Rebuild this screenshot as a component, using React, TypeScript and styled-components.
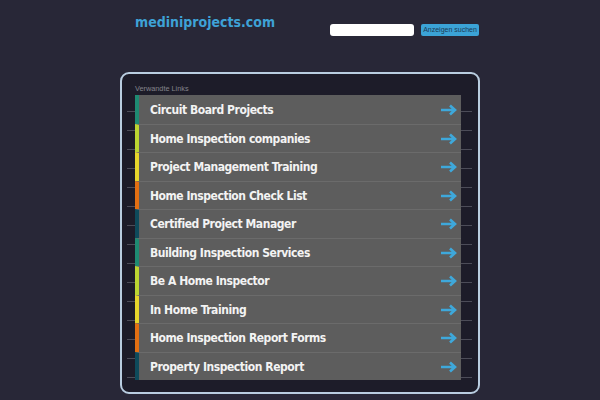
import React from "react";
import styled, { createGlobalStyle } from "styled-components";

const GlobalStyle = createGlobalStyle`
  html, body {
    margin: 0;
    padding: 0;
    background: #282737;
  }
  body {
    font-family: "DejaVu Sans", "Liberation Sans", sans-serif;
  }
`;

const Page = styled.div`
  width: 360px;
  margin: 0 auto;
`;

const Header = styled.header`
  display: flex;
  justify-content: space-between;
  align-items: flex-start;
  height: 72px;
  box-sizing: border-box;
  padding: 14px 1px 0 15px;
`;

const Title = styled.a`
  font-family: "DejaVu Sans Condensed", "DejaVu Sans", sans-serif;
  font-weight: bold;
  font-size: 14px;
  line-height: 17px;
  color: #3ea2d6;
  text-decoration: none;
`;

const SearchForm = styled.form`
  display: flex;
  gap: 7px;
  margin: 10px 0 0;
`;

const SearchInput = styled.input`
  width: 84px;
  height: 12px;
  box-sizing: border-box;
  border: none;
  border-radius: 3px;
  background: #ffffff;
  padding: 0 4px;
  outline: none;
`;

const SearchButton = styled.button`
  width: 58px;
  height: 12px;
  box-sizing: border-box;
  border: none;
  border-radius: 2px;
  background: #3ba3d6;
  color: #1b3a55;
  font-family: "Liberation Sans", Arial, sans-serif;
  font-size: 7px;
  line-height: 12px;
  padding: 0;
  white-space: nowrap;
`;

const Panel = styled.section`
  border: 2px solid #b9cde0;
  border-radius: 9px;
  background: #1d1c29;
  padding: 10px 6px 12px 5px;
`;

const Label = styled.div`
  font-family: "Liberation Sans", Arial, sans-serif;
  font-size: 7.3px;
  line-height: 10px;
  color: #84848c;
  padding-left: 8px;
  margin-bottom: 1px;
`;

const ListFrame = styled.ul`
  list-style: none;
  margin: 0;
  padding: 0 11px 0 8px;
  background: repeating-linear-gradient(
    to bottom,
    transparent 0px,
    transparent 16px,
    #4c4c58 16px,
    #4c4c58 17px,
    transparent 17px,
    transparent 19px
  );
`;

const Row = styled.li<{ $stripe: string }>`
  display: flex;
  align-items: center;
  justify-content: space-between;
  height: 28.5px;
  box-sizing: border-box;
  background: #5d5d5d;
  border-left: 4px solid ${(p) => p.$stripe};
  padding: 1px 4px 0 11px;
  & + & {
    border-top: 1px solid #6b6b6b;
  }
`;

const RowText = styled.a`
  font-family: "DejaVu Sans Condensed", "DejaVu Sans", sans-serif;
  font-weight: bold;
  font-size: 12px;
  letter-spacing: -0.45px;
  color: #f3f3f3;
  text-decoration: none;
`;

const Arrow = () => (
  <svg width="17" height="12" viewBox="0 0 17 12" aria-hidden="true">
    <path
      d="M1 6 H15 M10 1.5 L15 6 L10 10.5"
      fill="none"
      stroke="#3ea8db"
      strokeWidth="2.6"
      strokeLinecap="butt"
      strokeLinejoin="miter"
    />
  </svg>
);

const links: { text: string; stripe: string }[] = [
  { text: "Circuit Board Projects", stripe: "#1e8a72" },
  { text: "Home Inspection companies", stripe: "#bcd531" },
  { text: "Project Management Training", stripe: "#e6d52b" },
  { text: "Home Inspection Check List", stripe: "#e36f12" },
  { text: "Certified Project Manager", stripe: "#0e4a5b" },
  { text: "Building Inspection Services", stripe: "#1e8a72" },
  { text: "Be A Home Inspector", stripe: "#bcd531" },
  { text: "In Home Training", stripe: "#e6d52b" },
  { text: "Home Inspection Report Forms", stripe: "#e36f12" },
  { text: "Property Inspection Report", stripe: "#0e4a5b" },
];

export default function App() {
  return (
    <>
      <GlobalStyle />
      <Page>
        <Header>
          <Title href="#">mediniprojects.com</Title>
          <SearchForm onSubmit={(e) => e.preventDefault()}>
            <SearchInput type="text" />
            <SearchButton type="submit">Anzeigen suchen</SearchButton>
          </SearchForm>
        </Header>
        <Panel>
          <Label>Verwandte Links</Label>
          <ListFrame>
            {links.map((l) => (
              <Row key={l.text} $stripe={l.stripe}>
                <RowText href="#">{l.text}</RowText>
                <Arrow />
              </Row>
            ))}
          </ListFrame>
        </Panel>
      </Page>
    </>
  );
}
